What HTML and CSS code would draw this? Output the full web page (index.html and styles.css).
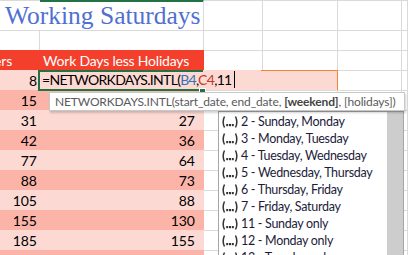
FILE: index.html
```html
<!DOCTYPE html>
<html lang="en">
<head>
    <meta charset="UTF-8">
    <title>Working Saturdays</title>
    <link rel="stylesheet" href="styles.css">
</head>
<body>

    <div class="sheet">
        <!-- fila del titulo -->
        <div class="row title-row">
            <div class="cell col-a"><span class="title">Working Saturdays</span></div>
            <div class="cell col-b sel-top"></div>
            <div class="cell"></div><div class="cell"></div><div class="cell"></div><div class="cell"></div>
        </div>
        <div class="row">
            <div class="cell"></div><div class="cell"></div>
            <div class="cell"></div><div class="cell"></div><div class="cell"></div><div class="cell"></div>
        </div>

        <!-- cabecera de la tabla -->
        <div class="row">
            <div class="cell tbl head head-a"><span>Numbers</span></div>
            <div class="cell tbl head">Work Days less Holidays</div>
            <div class="cell"></div><div class="cell"></div><div class="cell"></div><div class="cell"></div>
        </div>

        <div class="row">
            <div class="cell tbl light num">8</div>
            <div class="cell tbl light num"></div>
            <div class="cell"></div><div class="cell"></div><div class="cell"></div><div class="cell"></div>
        </div>
        <div class="row">
            <div class="cell tbl dark num">15</div>
            <div class="cell tbl dark num"></div>
            <div class="cell"></div><div class="cell"></div><div class="cell"></div><div class="cell"></div>
        </div>
        <div class="row">
            <div class="cell tbl light num">31</div>
            <div class="cell tbl light num">27</div>
            <div class="cell"></div><div class="cell"></div><div class="cell"></div><div class="cell"></div>
        </div>
        <div class="row">
            <div class="cell tbl dark num">42</div>
            <div class="cell tbl dark num">36</div>
            <div class="cell"></div><div class="cell"></div><div class="cell"></div><div class="cell"></div>
        </div>
        <div class="row">
            <div class="cell tbl light num">77</div>
            <div class="cell tbl light num">64</div>
            <div class="cell"></div><div class="cell"></div><div class="cell"></div><div class="cell"></div>
        </div>
        <div class="row">
            <div class="cell tbl dark num">88</div>
            <div class="cell tbl dark num">73</div>
            <div class="cell"></div><div class="cell"></div><div class="cell"></div><div class="cell"></div>
        </div>
        <div class="row">
            <div class="cell tbl light num">105</div>
            <div class="cell tbl light num">88</div>
            <div class="cell"></div><div class="cell"></div><div class="cell"></div><div class="cell"></div>
        </div>
        <div class="row">
            <div class="cell tbl dark num">155</div>
            <div class="cell tbl dark num">130</div>
            <div class="cell"></div><div class="cell"></div><div class="cell"></div><div class="cell"></div>
        </div>
        <div class="row">
            <div class="cell tbl light num">185</div>
            <div class="cell tbl light num">155</div>
            <div class="cell"></div><div class="cell"></div><div class="cell"></div><div class="cell"></div>
        </div>
        <div class="row">
            <div class="cell tbl dark num"></div>
            <div class="cell tbl dark num"></div>
            <div class="cell"></div><div class="cell"></div><div class="cell"></div><div class="cell"></div>
        </div>

        <!-- celda en modo edicion -->
        <div class="editor">
            <span class="frame-green"></span>
            <span class="frame-orange"></span>
            <span class="handle"></span>
            <span class="formula">=NETWORKDAYS.INTL(<span class="ref-b">B4</span>,<span class="ref-c">C4</span>,11<span class="caret"></span></span>
        </div>

        <!-- ayuda de la funcion -->
        <div class="tooltip">NETWORKDAYS.INTL(start_date, end_date, <b>[weekend]</b>, [holidays])</div>

        <!-- lista de valores -->
        <div class="dropdown">
            <ul class="options">
                <li><svg class="opt-icon" viewBox="0 0 18 14"><path d="M3.5 1.5 Q0.8 7 3.5 12.5" /><path d="M14.5 1.5 Q17.2 7 14.5 12.5" /><rect x="5.2" y="9" width="2" height="2.2"/><rect x="8" y="9" width="2" height="2.2"/><rect x="10.8" y="9" width="2" height="2.2"/></svg>2 - Sunday, Monday</li>
                <li><svg class="opt-icon" viewBox="0 0 18 14"><path d="M3.5 1.5 Q0.8 7 3.5 12.5" /><path d="M14.5 1.5 Q17.2 7 14.5 12.5" /><rect x="5.2" y="9" width="2" height="2.2"/><rect x="8" y="9" width="2" height="2.2"/><rect x="10.8" y="9" width="2" height="2.2"/></svg>3 - Monday, Tuesday</li>
                <li><svg class="opt-icon" viewBox="0 0 18 14"><path d="M3.5 1.5 Q0.8 7 3.5 12.5" /><path d="M14.5 1.5 Q17.2 7 14.5 12.5" /><rect x="5.2" y="9" width="2" height="2.2"/><rect x="8" y="9" width="2" height="2.2"/><rect x="10.8" y="9" width="2" height="2.2"/></svg>4 - Tuesday, Wednesday</li>
                <li><svg class="opt-icon" viewBox="0 0 18 14"><path d="M3.5 1.5 Q0.8 7 3.5 12.5" /><path d="M14.5 1.5 Q17.2 7 14.5 12.5" /><rect x="5.2" y="9" width="2" height="2.2"/><rect x="8" y="9" width="2" height="2.2"/><rect x="10.8" y="9" width="2" height="2.2"/></svg>5 - Wednesday, Thursday</li>
                <li><svg class="opt-icon" viewBox="0 0 18 14"><path d="M3.5 1.5 Q0.8 7 3.5 12.5" /><path d="M14.5 1.5 Q17.2 7 14.5 12.5" /><rect x="5.2" y="9" width="2" height="2.2"/><rect x="8" y="9" width="2" height="2.2"/><rect x="10.8" y="9" width="2" height="2.2"/></svg>6 - Thursday, Friday</li>
                <li><svg class="opt-icon" viewBox="0 0 18 14"><path d="M3.5 1.5 Q0.8 7 3.5 12.5" /><path d="M14.5 1.5 Q17.2 7 14.5 12.5" /><rect x="5.2" y="9" width="2" height="2.2"/><rect x="8" y="9" width="2" height="2.2"/><rect x="10.8" y="9" width="2" height="2.2"/></svg>7 - Friday, Saturday</li>
                <li><svg class="opt-icon" viewBox="0 0 18 14"><path d="M3.5 1.5 Q0.8 7 3.5 12.5" /><path d="M14.5 1.5 Q17.2 7 14.5 12.5" /><rect x="5.2" y="9" width="2" height="2.2"/><rect x="8" y="9" width="2" height="2.2"/><rect x="10.8" y="9" width="2" height="2.2"/></svg>11 - Sunday only</li>
                <li><svg class="opt-icon" viewBox="0 0 18 14"><path d="M3.5 1.5 Q0.8 7 3.5 12.5" /><path d="M14.5 1.5 Q17.2 7 14.5 12.5" /><rect x="5.2" y="9" width="2" height="2.2"/><rect x="8" y="9" width="2" height="2.2"/><rect x="10.8" y="9" width="2" height="2.2"/></svg>12 - Monday only</li>
                <li><svg class="opt-icon" viewBox="0 0 18 14"><path d="M3.5 1.5 Q0.8 7 3.5 12.5" /><path d="M14.5 1.5 Q17.2 7 14.5 12.5" /><rect x="5.2" y="9" width="2" height="2.2"/><rect x="8" y="9" width="2" height="2.2"/><rect x="10.8" y="9" width="2" height="2.2"/></svg>13 - Tuesday only</li>
            </ul>
            <div class="scrollbar"></div>
        </div>
    </div>

</body>
</html>
```

FILE: styles.css
```css
/* --- General --- */
body {
    margin: 0;
    background: #ffffff;
    font-family: Lato, "Liberation Sans", sans-serif;
    font-size: 14px;
    color: #000;
    overflow: hidden;
}

/* --- Hoja --- */
.sheet {
    position: relative;
    height: 255px;
    overflow: hidden;
}
.row {
    display: grid;
    grid-template-columns: 40px 164px 59px 75px 64px 1fr;
    height: 20px;
}
.title-row { height: 30px; }

.cell {
    box-sizing: border-box;
    border-top: 1px solid #dadada;
    border-right: 1px solid #dadada;
    line-height: 19px;
    white-space: nowrap;
    overflow: hidden;
}
.title-row .col-a { overflow: visible; border-right: none; }
.sel-top { border-top-color: #217346; box-shadow: inset 0 1px 0 #217346; }

.title {
    display: block;
    padding: 1px 0 0 5px;
    font-family: "Liberation Serif", serif;
    font-size: 25.5px;
    line-height: 27px;
    color: #4f70d2;
}

/* --- Tabla --- */
.tbl { border-color: transparent; }
.head { background: #f43f2c; color: #ffffff; padding-left: 3px; letter-spacing: -0.2px; }
.head-a {
    display: flex;
    justify-content: flex-end;
    padding-right: 27px;
}
.light { background: #fdd9d3; }
.dark { background: #fcb4a9; }
.num { text-align: right; padding-right: 2px; }
.tbl.num + .tbl.num { padding-right: 8px; }

/* --- Celda en edicion --- */
.editor {
    position: absolute;
    left: 40px;
    top: 70px;
    width: 297px;
    height: 20px;
    background: #fdd9d3;
}
.frame-green {
    position: absolute;
    left: -2px;
    top: 0;
    width: 165px;
    height: 21px;
    border: 2px solid #217346;
    border-right: none;
    box-sizing: border-box;
}
.frame-orange {
    position: absolute;
    left: 221px;
    top: 0;
    width: 77px;
    height: 20px;
    border-top: 1px solid #f58233;
    border-right: 1px solid #f58233;
    box-sizing: border-box;
}
.handle {
    position: absolute;
    left: 159px;
    top: 18px;
    width: 5px;
    height: 5px;
    background: #217346;
    border: 1px solid #fff;
}
.formula {
    position: relative;
    display: block;
    padding-left: 2px;
    line-height: 20px;
    letter-spacing: -0.7px;
    white-space: nowrap;
}
.ref-b { color: #2f75b5; }
.ref-c { color: #c0392b; }
.caret {
    display: inline-block;
    width: 1px;
    height: 17px;
    margin-left: 2px;
    background: #000;
    vertical-align: -3px;
}

/* --- Tooltip --- */
.tooltip {
    position: absolute;
    left: 49px;
    top: 92px;
    width: 356px;
    height: 19px;
    box-sizing: border-box;
    padding-left: 5px;
    background: #fff;
    border: 1px solid #c8c8c8;
    box-shadow: 1px 2px 2px rgba(0, 0, 0, 0.18);
    font-family: Lato, sans-serif;
    font-size: 12px;
    letter-spacing: -0.15px;
    line-height: 17px;
    color: #5a5a5a;
    white-space: nowrap;
    z-index: 2;
}
.tooltip b { color: #444; }

/* --- Lista desplegable --- */
.dropdown {
    position: absolute;
    left: 218px;
    top: 111px;
    width: 186px;
    height: 160px;
    box-sizing: border-box;
    background: #fff;
    border: 1px solid #a6a6a6;
    z-index: 1;
}
.options {
    list-style: none;
    margin: 0;
    padding: 1px 0 0 2px;
    font-family: Lato, sans-serif;
    font-size: 12.5px;
    letter-spacing: -0.3px;
    color: #1c1c3a;
}
.options li {
    height: 17px;
    line-height: 17px;
    display: flex;
    align-items: center;
    white-space: nowrap;
}
.opt-icon {
    width: 18px;
    height: 14px;
    margin-right: 2px;
    fill: #333;
}
.opt-icon path { fill: none; stroke: #333; stroke-width: 1.5; }
.scrollbar {
    position: absolute;
    right: 0;
    top: 0;
    bottom: 0;
    width: 16px;
    background: #cdcdcd;
}
```
